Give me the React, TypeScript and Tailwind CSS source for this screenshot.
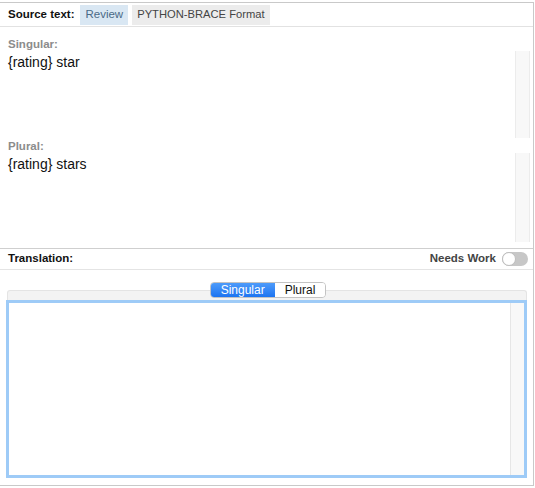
import React from "react";

const font = { fontFamily: '"Helvetica Neue", "Liberation Sans", Arial, sans-serif' };

function ScrollStrip({ h }: { h: string }) {
  return <div className={`w-[15px] ${h} bg-[#f8f8f8] border-x border-[#ececec]`}></div>;
}

function SourceBlock({ label, text, top, boxH }: { label: string; text: string; top: string; boxH: string }) {
  return (
    <div className={`${top}`}>
      <div className="h-[14px] px-2 text-[11.5px] leading-[14px] font-bold text-[#8c8c8c]">{label}</div>
      <div className={`flex ${boxH}`}>
        <div className="flex-1 px-2 pt-[3px] text-[14px] leading-[17px] text-[#111]">{text}</div>
        <div className="mr-[3px]">
          <ScrollStrip h={boxH} />
        </div>
      </div>
    </div>
  );
}

export default function App() {
  return (
    <div className="w-[535px] h-[488px] bg-white pt-[2px]" style={font}>
      <div className="w-[534px] h-[484px] border-t border-r border-b border-[#c9c9c9] flex flex-col">
        {/* HEADER SOURCE */}
        <div className="h-[24px] flex items-center px-2 border-b border-[#e2e2e2]">
          <span className="text-[11.5px] font-bold text-[#111] mr-[6px]">Source text:</span>
          <span className="h-[20px] px-[5px] flex items-center bg-[#d9e7f3] text-[11.5px] text-[#4a6a86] mr-[4px]">Review</span>
          <span className="h-[20px] px-[5px] flex items-center bg-[#ececec] text-[11.2px] text-[#444]">PYTHON-BRACE Format</span>
        </div>

        {/* SOURCE CONTENT */}
        <div className="h-[222px] border-b border-[#cfcfcf]">
          <SourceBlock label="Singular:" text="{rating} star" top="mt-[10px]" boxH="h-[87px]" />
          <SourceBlock label="Plural:" text="{rating} stars" top="mt-[1px]" boxH="h-[89px]" />
        </div>

        {/* TRANSLATION HEADER */}
        <div className="h-[21px] flex items-center justify-between px-2 border-b border-[#e4e4e4]">
          <span className="text-[11.5px] font-bold text-[#111]">Translation:</span>
          <div className="flex items-center gap-[6px] mr-[-3px]">
            <span className="text-[11.5px] font-bold text-[#444]">Needs Work</span>
            <div className="w-[26px] h-[14px] rounded-full bg-[#c7c7c7] relative">
              <div className="absolute left-0 top-0 w-[14px] h-[14px] rounded-full bg-white border border-[#bdbdbd]"></div>
            </div>
          </div>
        </div>

        {/* TRANSLATION EDITOR */}
        <div className="px-[6px] pt-[12px]">
          <div className="flex justify-center relative z-10 ml-[3px]">
            <div className="flex h-[16px] text-[12px] leading-[14px] rounded-[4px] overflow-hidden border border-[#c3c3c3]">
              <span className="px-[10px] flex items-center text-white bg-gradient-to-b from-[#4d9bfa] to-[#1c74f1]">Singular</span>
              <span className="px-[10px] flex items-center text-[#111] bg-white">Plural</span>
            </div>
          </div>
          <div className="mt-[-8px] ml-[1px] h-[10px] bg-[#f3f3f3] border border-b-0 border-[#e4e4e4] rounded-t-[3px]"></div>
          <div className="h-[178px] border-[3px] border-[#9ecbf7] flex justify-end">
            <div className="w-[14px] h-full bg-[#f8f8f8] border-l border-[#e6e6e6]"></div>
          </div>
        </div>
      </div>
    </div>
  );
}
